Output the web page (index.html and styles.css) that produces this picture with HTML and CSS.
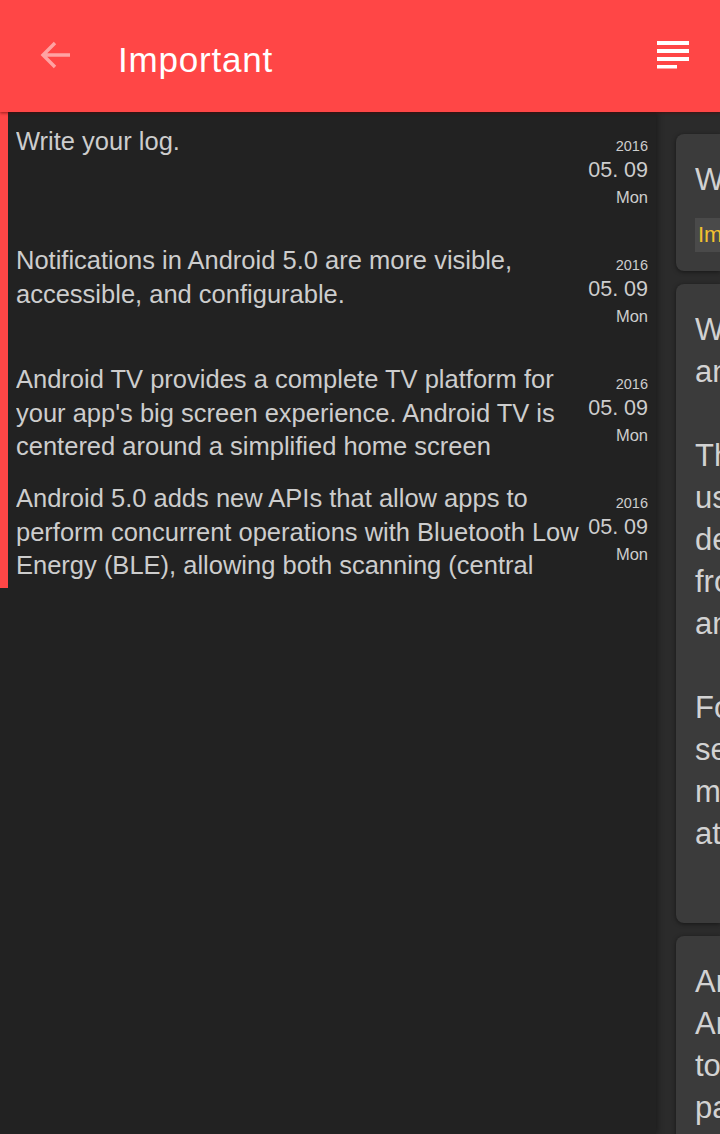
FILE: index.html
```html
<!DOCTYPE html>
<html lang="en">
<head>
    <meta charset="UTF-8">
    <meta name="viewport" content="width=device-width, initial-scale=1.0">
    <title>Important</title>
    <link rel="stylesheet" href="styles.css">
</head>
<body>
    <header class="toolbar">
        <button class="back-btn" aria-label="Back">
            <svg width="36" height="36" viewBox="0 0 36 36"><path d="M32 18H6M17 6L5 18l12 12" fill="none" stroke="#ffa3a3" stroke-width="3.4"/></svg>
        </button>
        <h1 class="title">Important</h1>
        <button class="menu-btn" aria-label="Menu">
            <svg width="34" height="30" viewBox="0 0 34 30"><rect x="1" y="1" width="32" height="4" fill="#fff"/><rect x="1" y="9" width="32" height="4" fill="#fff"/><rect x="1" y="17" width="32" height="4" fill="#fff"/><rect x="1" y="25" width="20" height="3.5" fill="#fff"/></svg>
        </button>
    </header>

    <div class="layout">
        <aside class="drawer">
            <ul class="log-list">
                <li class="log-item">
                    <p class="log-text">Write your log.</p>
                    <div class="log-date"><span class="year">2016</span><span class="day">05. 09</span><span class="week">Mon</span></div>
                </li>
                <li class="log-item">
                    <p class="log-text">Notifications in Android 5.0 are more visible, accessible, and configurable.</p>
                    <div class="log-date"><span class="year">2016</span><span class="day">05. 09</span><span class="week">Mon</span></div>
                </li>
                <li class="log-item">
                    <p class="log-text">Android TV provides a complete TV platform for your app's big screen experience. Android TV is centered around a simplified home screen</p>
                    <div class="log-date"><span class="year">2016</span><span class="day">05. 09</span><span class="week">Mon</span></div>
                </li>
                <li class="log-item">
                    <p class="log-text">Android 5.0 adds new APIs that allow apps to perform concurrent operations with Bluetooth Low Energy (BLE), allowing both scanning (central mode) and advertising (peripheral mode).</p>
                    <div class="log-date"><span class="year">2016</span><span class="day">05. 09</span><span class="week">Mon</span></div>
                </li>
            </ul>
        </aside>

        <main class="content">
            <div class="card">
                <p class="card-line">Write your log.</p>
                <span class="tag">Important</span>
            </div>
            <div class="card card-long">
                <p class="card-line">With Material design, your app</p>
                <p class="card-line">and its look and feel.</p>
                <p class="card-line">&nbsp;</p>
                <p class="card-line">The Material design language</p>
                <p class="card-line">uses bold, graphic, intentional</p>
                <p class="card-line">design, with meaningful motion</p>
                <p class="card-line">from the system to your app</p>
                <p class="card-line">and back.</p>
                <p class="card-line">&nbsp;</p>
                <p class="card-line">For more information, please</p>
                <p class="card-line">see the Material design</p>
                <p class="card-line">material guidelines</p>
                <p class="card-line">at the developer site.</p>
            </div>
            <div class="card">
                <p class="card-line">Android TV provides a</p>
                <p class="card-line">Android TV experience</p>
                <p class="card-line">to bring your apps</p>
                <p class="card-line">past the big screen</p>
            </div>
        </main>
    </div>
</body>
</html>
```

FILE: styles.css
```css
* { margin: 0; padding: 0; box-sizing: border-box; }
html, body { height: 100%; }
body { background: #2b2b2b; font-family: 'Liberation Sans', Arial, sans-serif; color: #d2d2d2; overflow: hidden; }

.toolbar { height: 112px; background: #ff4646; display: flex; align-items: center; padding: 0 30px 0 38px; position: relative; z-index: 2; box-shadow: 0 1px 3px rgba(80, 0, 0, 0.6); }
.toolbar button { background: none; border: none; display: flex; }
.back-btn { margin-top: -2px; }
.title { flex: 1; font-size: 35px; font-weight: normal; color: #fff; margin-left: 44px; margin-top: 8px; letter-spacing: 0.8px; }
.menu-btn { margin-top: -2px; }

.layout { display: flex; height: calc(100% - 112px); }

.drawer { width: 656px; flex-shrink: 0; background: #222222; box-shadow: 2px 0 6px rgba(0, 0, 0, 0.35); position: relative; z-index: 1; }
.log-list { list-style: none; border-left: 8px solid #ff4646; }
.log-item { height: 119px; display: flex; padding: 13px 8px 0 8px; }
.log-text { flex: 1; font-size: 25.5px; line-height: 33.5px; max-height: 101px; overflow: hidden; color: #cdcdcd; }
.log-date { width: 62px; flex-shrink: 0; display: flex; flex-direction: column; align-items: flex-end; padding-top: 13px; color: #cdcdcd; }
.log-date .year { font-size: 14.5px; line-height: 16px; }
.log-date .day { font-size: 21.5px; line-height: 32px; white-space: nowrap; }
.log-date .week { font-size: 16.5px; line-height: 22px; }

.content { flex: 1; padding: 22px 0 0 20px; display: flex; flex-direction: column; gap: 13px; overflow: hidden; }
.card { background: #3b3b3b; border-radius: 8px 0 0 8px; padding: 25px 0 19px 19px; box-shadow: 0 1px 4px rgba(0, 0, 0, 0.5); }
.card-long { padding-bottom: 68px; }
.card-line { font-size: 31px; line-height: 42px; white-space: nowrap; }
.tag { display: inline-block; margin-top: 17px; background: #4a4a4a; color: #f2c230; font-size: 22px; line-height: 34px; padding: 0 3px; white-space: nowrap; }
```
